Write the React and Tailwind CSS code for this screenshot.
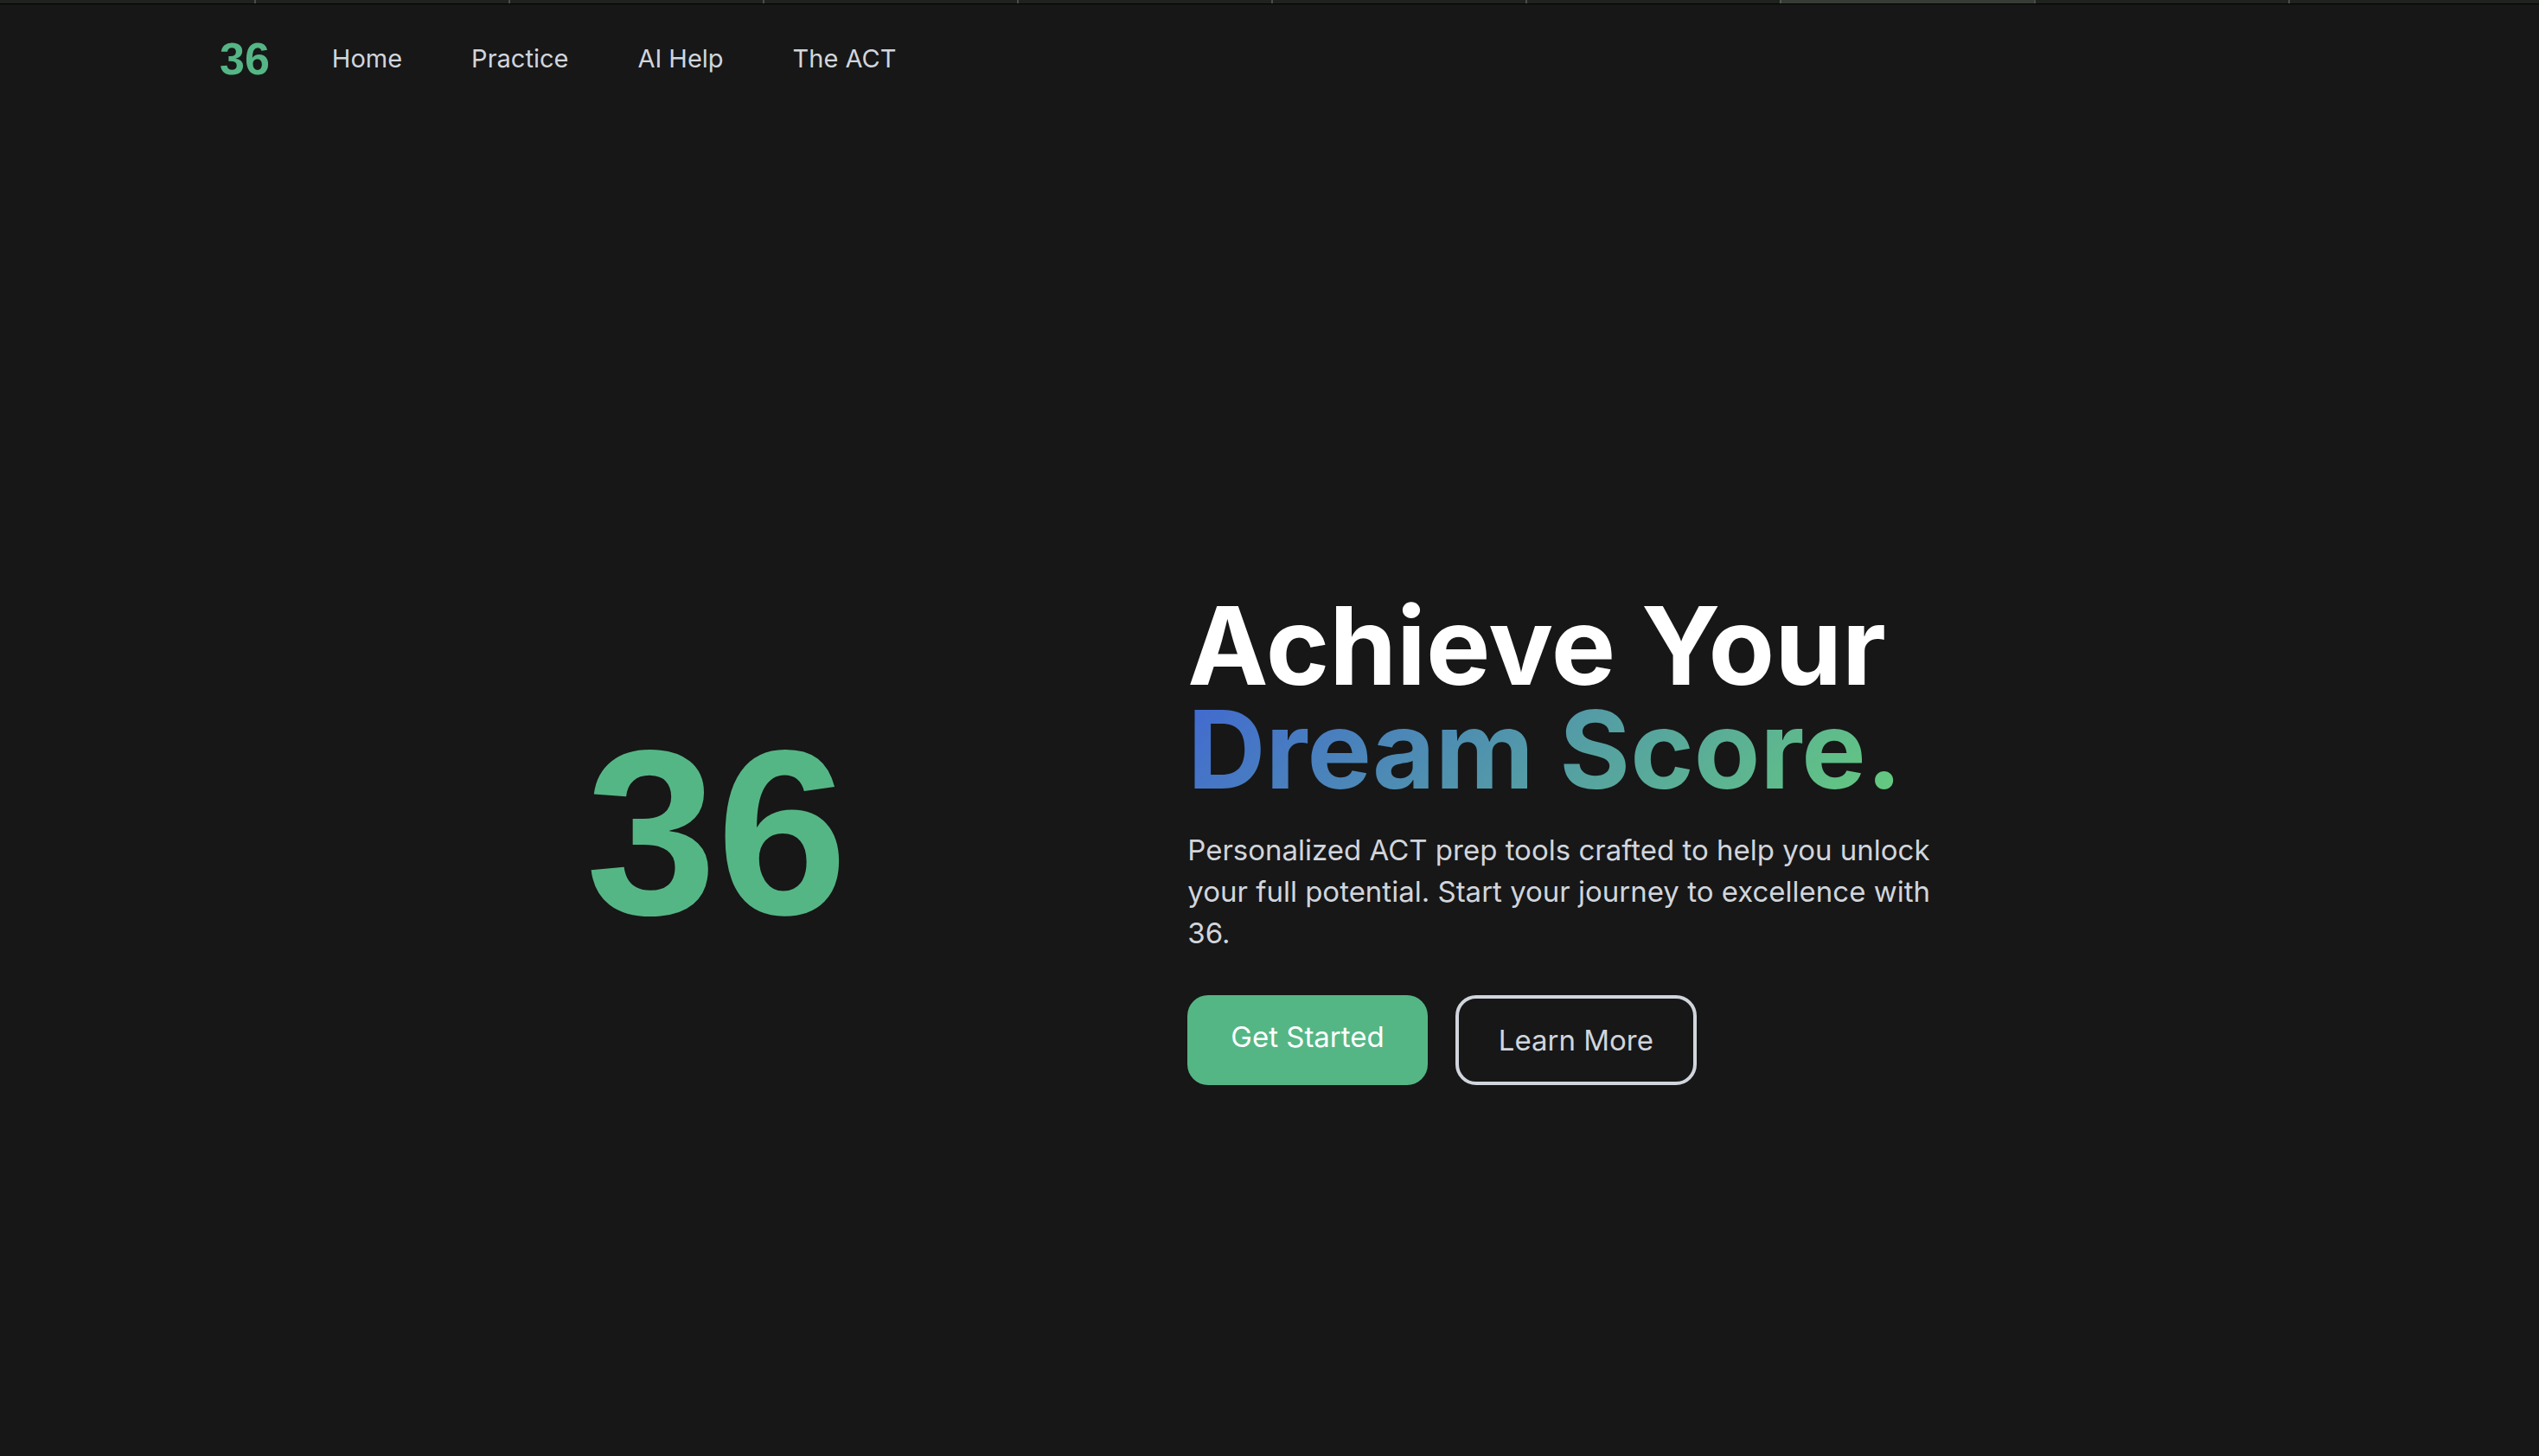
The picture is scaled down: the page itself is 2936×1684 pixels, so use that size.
const links = ["Home", "Practice", "AI Help", "The ACT"];
const tabs = Array.from({ length: 10 }, (_, i) => i);
const ACTIVE_TAB = 7;

function TabStrip() {
  return (
    <div aria-hidden="true" className="h-[5px] overflow-hidden border-b border-black bg-[#20221f]">
      <div className="-mr-1 grid h-full grid-cols-10">
        {tabs.map((i) => (
          <span
            key={i}
            className={
              i === ACTIVE_TAB
                ? "border-l-2 border-[#51554f] bg-[#363b36]"
                : "border-l-2 border-[#4a4c49] first:border-l-0"
            }
          />
        ))}
      </div>
    </div>
  );
}

function Navbar() {
  return (
    <nav className="flex items-center gap-[72px] px-[254px] py-8">
      <a
        href="#"
        className="font-['Liberation_Sans',Arial,sans-serif] text-[52px] leading-[62px] font-bold text-[#55b685]"
      >
        36
      </a>
      <ul className="flex gap-20 text-[29px] leading-[62px] text-gray-300">
        {links.map((label) => (
          <li key={label}>
            <a href="#">{label}</a>
          </li>
        ))}
      </ul>
    </nav>
  );
}

function Hero() {
  return (
    <main className="flex flex-1 items-center px-[284px] pt-[126px]">
      <div className="flex w-[46%] shrink-0 justify-center pb-4 font-['Liberation_Sans',Arial,sans-serif] text-[272px] leading-none font-bold text-[#55b685]">
        <span>36</span>
      </div>
      <div className="max-w-[896px]">
        <h1 className="text-[125px] leading-[120px] font-bold text-white">
          <span className="block">Achieve Your</span>
          <span className="block w-fit bg-linear-[135deg] from-[#4169d1] to-[#65cc7d] bg-clip-text text-transparent">
            Dream Score.
          </span>
        </h1>
        <p className="mt-8 text-[33px] leading-[48px] text-gray-300">
          Personalized ACT prep tools crafted to help you unlock your full potential. Start your
          journey to excellence with 36.
        </p>
        <div className="mt-12 flex gap-8 text-[33px] leading-[48px]">
          <button className="flex items-start rounded-3xl bg-[#55b685] px-[50px] py-6 text-white">
            Get Started
          </button>
          <button className="rounded-3xl border-4 border-gray-300 px-[46px] py-6 text-gray-300">
            Learn More
          </button>
        </div>
      </div>
    </main>
  );
}

export default function App() {
  return (
    <div className="flex min-h-screen flex-col bg-[#171717] font-['Inter',sans-serif]">
      <TabStrip />
      <Navbar />
      <Hero />
    </div>
  );
}
